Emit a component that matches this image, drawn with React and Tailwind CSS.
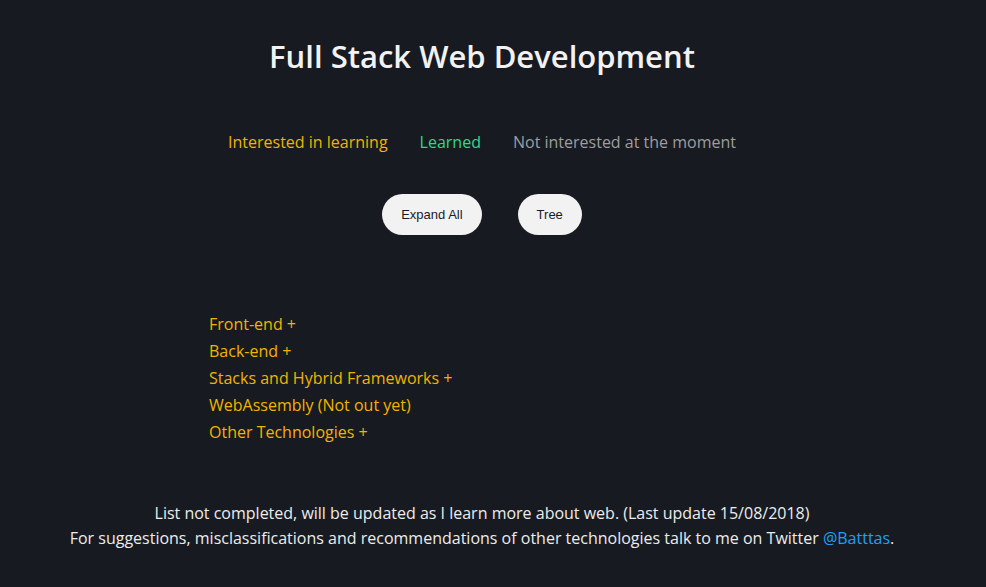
export default function App() {
    const sections = [
        'Front-end +',
        'Back-end +',
        'Stacks and Hybrid Frameworks +',
        'WebAssembly (Not out yet)',
        'Other Technologies +',
    ];

    return (
        <div className="min-h-[587px] bg-[#181a21] text-white" style={{ fontFamily: '"Open Sans", sans-serif' }}>
            <div className="w-[964px] flex flex-col items-center">

                {/* Title */}
                <h1 className="mt-[33px] text-[31px] leading-[46px] font-semibold text-[#f2f2f2]">
                    Full Stack Web Development
                </h1>

                {/* Legend */}
                <div className="mt-[51px] flex gap-8 text-base leading-6">
                    <span className="text-[#f0b400]">Interested in learning</span>
                    <span className="text-[#2bdc86]">Learned</span>
                    <span className="text-[#9e9e9e]">Not interested at the moment</span>
                </div>

                {/* Buttons */}
                <div className="mt-[40px] flex gap-9" style={{ fontFamily: '"Liberation Sans", Arial, sans-serif' }}>
                    <button className="h-[41px] px-[19px] rounded-full bg-[#f2f2f2] text-[13px] text-[#1a1a2a]">
                        Expand All
                    </button>
                    <button className="h-[41px] px-[19px] rounded-full bg-[#f2f2f2] text-[13px] text-[#1a1a2a]">
                        Tree
                    </button>
                </div>
            </div>

            {/* Sections */}
            <ul className="mt-[76px] pl-[209px] text-base leading-[27px] text-[#f0b400]">
                {sections.map((s) => (
                    <li key={s}>{s}</li>
                ))}
            </ul>

            {/* Footer */}
            <div className="w-[964px] mt-[55px] text-center text-base leading-[25px] text-[#ececec]">
                <p>List not completed, will be updated as I learn more about web. (Last update 15/08/2018)</p>
                <p>
                    For suggestions, misclassifications and recommendations of other technologies talk to me on Twitter{' '}
                    <a className="text-[#1da1f2]">@Batttas</a>.
                </p>
            </div>
        </div>
    );
}
